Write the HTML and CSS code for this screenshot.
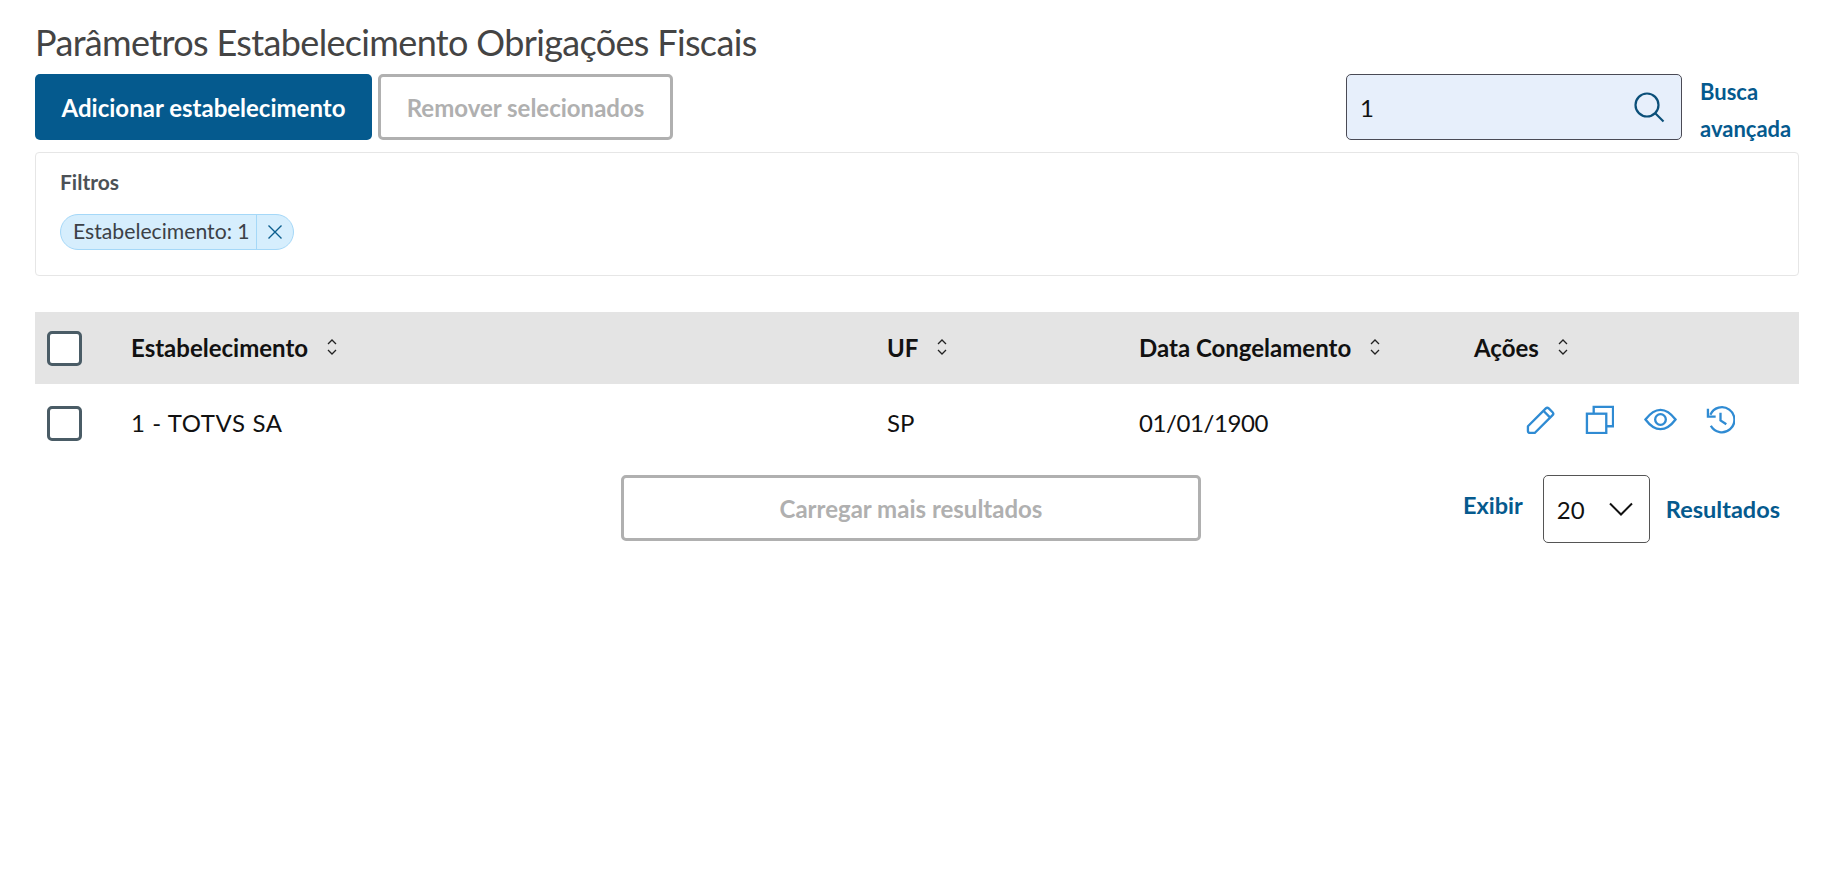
FILE: index.html
```html
<!DOCTYPE html>
<html lang="pt-BR">

<head>
    <meta charset="UTF-8">
    <title>Parâmetros Estabelecimento Obrigações Fiscais</title>
    <link rel="stylesheet" href="styles.css">
</head>

<body>
    <div class="page">
        <h1 class="page-title">Parâmetros Estabelecimento Obrigações Fiscais</h1>

        <div class="toolbar">
            <button class="btn btn-primary">Adicionar estabelecimento</button>
            <button class="btn btn-disabled btn-remove" disabled>Remover selecionados</button>
            <div class="search">
                <span class="search-value">1</span>
                <svg class="search-icon" viewBox="0 0 32 32" fill="none" stroke="#0b4f79" stroke-width="2.2">
                    <circle cx="14" cy="14" r="11.5" />
                    <path d="M22.5 22.5L30.5 30.5" />
                </svg>
            </div>
            <a class="link search-advanced">Busca avançada</a>
        </div>

        <!-- filtros aplicados -->
        <div class="filters">
            <div class="filters-title">Filtros</div>
            <div class="chip">
                <span class="chip-label">Estabelecimento: 1</span>
                <span class="chip-close">
                    <svg viewBox="0 0 16 16" fill="none" stroke="#0b5e8e" stroke-width="1.4">
                        <path d="M1.5 1.5L14.5 14.5M14.5 1.5L1.5 14.5" />
                    </svg>
                </span>
            </div>
        </div>

        <div class="table">
            <div class="table-row table-head">
                <div><span class="checkbox"></span></div>
                <div class="th">Estabelecimento
                    <svg class="sort" viewBox="0 0 12 18" fill="none" stroke="#222" stroke-width="1.3">
                        <path d="M2 6L6 2L10 6M2 12L6 16L10 12" />
                    </svg>
                </div>
                <div class="th">UF
                    <svg class="sort" viewBox="0 0 12 18" fill="none" stroke="#222" stroke-width="1.3">
                        <path d="M2 6L6 2L10 6M2 12L6 16L10 12" />
                    </svg>
                </div>
                <div class="th">Data Congelamento
                    <svg class="sort" viewBox="0 0 12 18" fill="none" stroke="#222" stroke-width="1.3">
                        <path d="M2 6L6 2L10 6M2 12L6 16L10 12" />
                    </svg>
                </div>
                <div class="th">Ações
                    <svg class="sort" viewBox="0 0 12 18" fill="none" stroke="#222" stroke-width="1.3">
                        <path d="M2 6L6 2L10 6M2 12L6 16L10 12" />
                    </svg>
                </div>
            </div>
            <div class="table-row table-body">
                <div><span class="checkbox"></span></div>
                <div class="cell-name">1 - TOTVS SA</div>
                <div>SP</div>
                <div class="cell-date">01/01/1900</div>
                <div class="actions">
                    <svg viewBox="0 0 30 30" fill="none" stroke="#2f8bd3" stroke-width="2.4" stroke-linejoin="round">
                        <path d="M2 22L20.5 3.5Q22 2 23.5 3.5L27.5 7.500Q29 9 27.500 10.500L9 29H4Q2 29 2 27Z" />
                        <path d="M18 6L25 13" />
                    </svg>
                    <svg viewBox="0 0 30 30" fill="none" stroke="#2f8bd3" stroke-width="2.4">
                        <rect x="2" y="9" width="20" height="20" />
                        <path d="M9 9V2H29V22H22" />
                    </svg>
                    <svg class="icon-eye" viewBox="0 0 34 24" fill="none" stroke="#2f8bd3" stroke-width="2.4">
                        <path d="M1.500 12Q9 2 17 2T32.500 12Q25 22 17 22T1.500 12Z" />
                        <circle cx="17" cy="12" r="5.500" />
                    </svg>
                    <svg viewBox="0 0 30 30" fill="none" stroke="#2f8bd3" stroke-width="2.4">
                        <path d="M4.500 10A13 13 0 1 1 5 21.500" />
                        <path d="M2 4V12H10" />
                        <path d="M15 8V16L21 20" />
                    </svg>
                </div>
            </div>
        </div>

        <div class="table-footer">
            <button class="btn btn-disabled btn-more" disabled>Carregar mais resultados</button>
            <div class="page-size">
                <span class="link link-show">Exibir</span>
                <div class="select">
                    <span>20</span>
                    <svg viewBox="0 0 24 14" fill="none" stroke="#111" stroke-width="2">
                        <path d="M1 1.500L12 12.500L23 1.500" />
                    </svg>
                </div>
                <span class="link">Resultados</span>
            </div>
        </div>
    </div>
</body>

</html>
```

FILE: styles.css
```css
body {
    font-family: Lato, "Open Sans", sans-serif;
    margin: 0;
    background-color: #fff;
    color: #111;
}

.page {
    padding: 21px 33px 0 35px;
}

.page-title {
    margin: 0;
    font-size: 36px;
    line-height: 42px;
    font-weight: 400;
    letter-spacing: -0.65px;
    color: #444;
}

.toolbar {
    display: flex;
    height: 66px;
    margin-top: 11px;
}

.btn {
    height: 66px;
    font-family: inherit;
    font-size: 24px;
    font-weight: 700;
    border-radius: 5px;
    cursor: pointer;
}

.btn-primary {
    width: 337px;
    background-color: #055a8e;
    color: #fff;
    border: none;
}

.btn-disabled {
    background-color: #fff;
    color: #b0b0b0;
    border: 3px solid #b0b0b0;
}

.btn-remove {
    width: 295px;
    margin-left: 6px;
}

.search {
    width: 336px;
    height: 66px;
    box-sizing: border-box;
    margin-left: auto;
    display: flex;
    align-items: center;
    justify-content: space-between;
    padding: 0 16px 0 13px;
    background-color: #e7effb;
    border: 1px solid #4a4a55;
    border-radius: 5px;
    font-size: 24px;
}

.search-icon {
    width: 32px;
    height: 32px;
}

.link {
    color: #055a8e;
    font-size: 23.5px;
    font-weight: 700;
}

.search-advanced {
    width: 99px;
    margin-left: 18px;
    font-size: 22px;
    line-height: 37px;
    margin-top: -1px;
}

.filters {
    margin-top: 12px;
    height: 124px;
    box-sizing: border-box;
    padding: 17px 24px;
    border: 1px solid #e6e6e6;
    border-radius: 4px;
}

.filters-title {
    font-size: 21px;
    font-weight: 700;
    line-height: 24px;
    color: #4c5156;
}

.chip {
    display: inline-flex;
    align-items: stretch;
    height: 36px;
    box-sizing: border-box;
    margin-top: 20px;
    background-color: #d6eefd;
    border: 1px solid #a5d8f8;
    border-radius: 18px;
    font-size: 21.2px;
    color: #3c4147;
}

.chip-label {
    display: flex;
    align-items: center;
    padding: 0 6px 2px 12px;
    border-right: 1px solid #a5d8f8;
}

.chip-close {
    display: flex;
    align-items: center;
    padding: 0 10px 0 10px;
}

.chip-close svg {
    width: 16px;
    height: 16px;
}

.table {
    margin-top: 36px;
}

.table-row {
    display: grid;
    grid-template-columns: 96px 756px 252px 335px 1fr;
    align-items: center;
}

.table-head {
    height: 72px;
    background-color: #e4e4e4;
}

.table-body {
    height: 78px;
    font-size: 24px;
}

.table-row > div:first-child {
    padding-left: 12px;
    display: flex;
}

.cell-name {
    letter-spacing: 0.6px;
    margin-bottom: 2px;
}

.cell-date {
    letter-spacing: -0.4px;
    margin-bottom: 2px;
}

.table-body > div:nth-child(3) {
    margin-bottom: 2px;
}

.th {
    font-size: 24px;
    font-weight: 700;
    display: flex;
    align-items: center;
    margin-bottom: 2px;
}

.sort {
    width: 12px;
    height: 18px;
    margin-left: 18px;
}

.checkbox {
    width: 35px;
    height: 35px;
    box-sizing: border-box;
    background-color: #fff;
    border: 3px solid #4a5c66;
    border-radius: 5px;
}

.actions {
    display: flex;
    align-items: center;
    gap: 30px;
    padding-left: 52px;
    margin-top: -8px;
}

.actions svg {
    width: 29px;
    height: 29px;
}

.actions .icon-eye {
    width: 33px;
    margin-right: -1px;
}

.table-footer {
    display: flex;
    margin-top: 13px;
}

.btn-more {
    width: 580px;
    margin-left: 586px;
}

.page-size {
    display: flex;
    align-items: center;
    margin-left: auto;
    margin-right: 19px;
}

.link-show {
    margin-right: 20px;
    margin-top: -8px;
}

.select {
    width: 107px;
    height: 68px;
    box-sizing: border-box;
    display: flex;
    align-items: center;
    justify-content: space-between;
    padding: 0 16px 0 13px;
    margin-right: 16px;
    border: 1px solid #555;
    border-radius: 5px;
    font-size: 24px;
}

.select svg {
    width: 24px;
    height: 14px;
}
```
